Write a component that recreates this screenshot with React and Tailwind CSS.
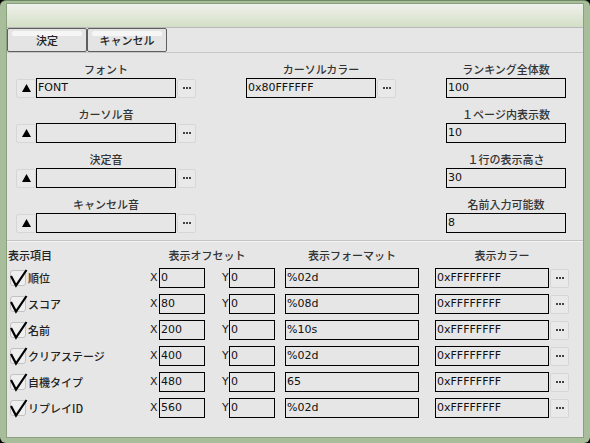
import React from "react";

const jp = { fontFamily: '"Noto Sans CJK JP", "DejaVu Sans", sans-serif' };
const mono = { fontFamily: '"DejaVu Sans", "Noto Sans CJK JP", sans-serif' };

function Dots() {
    return (
        <button className="w-[19px] h-[19px] flex items-center justify-center bg-[#e9e9e9] border border-[#d6d6d6] rounded-[2px]">
            <svg width="8" height="2" viewBox="0 0 8 2">
                <rect x="0" y="0" width="2" height="2" fill="#444" />
                <rect x="3" y="0" width="2" height="2" fill="#444" />
                <rect x="6" y="0" width="2" height="2" fill="#444" />
            </svg>
        </button>
    );
}

function UpBtn() {
    return (
        <button className="w-[20px] h-[19px] flex items-center justify-center bg-[#e9e9e9] border border-[#d6d6d6] rounded-[2px]">
            <svg width="9" height="8" viewBox="0 0 9 8">
                <polygon points="4.5,0 9,8 0,8" fill="#000" />
            </svg>
        </button>
    );
}

function Field({ value, className = "" }) {
    return (
        <div
            className={"h-[20px] border border-black bg-[#e6e6e6] text-[11px] leading-[18px] text-[#111] pl-[1px] overflow-hidden whitespace-nowrap " + className}
            style={mono}
        >
            {value}
        </div>
    );
}

function Label({ children }) {
    return (
        <div className="h-[16px] leading-[16px] text-center text-[11px] font-medium text-[#333]" style={jp}>
            {children}
        </div>
    );
}

function FileGroup({ label, value }) {
    return (
        <div className="flex flex-col">
            <Label>{label}</Label>
            <div className="flex items-center mt-[1px]">
                <UpBtn />
                <Field value={value} className="w-[140px]" />
                <div className="ml-[1px]">
                    <Dots />
                </div>
            </div>
        </div>
    );
}

function NumGroup({ label, value }) {
    return (
        <div className="flex flex-col">
            <Label>{label}</Label>
            <Field value={value} className="w-[120px] mt-[1px]" />
        </div>
    );
}

function Check() {
    return (
        <svg width="20" height="20" viewBox="0 0 20 20" className="shrink-0">
            <rect x="2.5" y="2.5" width="15" height="15" rx="2.5" fill="#efefef" stroke="#c2c2c2" />
            <path d="M3 8 L8 17.5 L18.5 2" fill="none" stroke="#000" strokeWidth="2.2" strokeLinejoin="miter" />
        </svg>
    );
}

const rows = [
    { name: "順位", x: "0", fmt: "%02d" },
    { name: "スコア", x: "80", fmt: "%08d" },
    { name: "名前", x: "200", fmt: "%10s" },
    { name: "クリアステージ", x: "400", fmt: "%02d" },
    { name: "自機タイプ", x: "480", fmt: "65" },
    { name: "リプレイID", x: "560", fmt: "%02d" },
];

export default function App() {
    return (
        <div className="w-[590px] h-[443px] bg-black">
            <div className="w-full h-full bg-[#a8be9b] rounded-[6px] border-t border-[#6f8a66] pl-[6px] pr-[6px] pt-[2px] pb-[5px]">
                <div className="w-full h-full border border-[#8aa07e] bg-[#e6e6e6] flex flex-col">
                    {/* TITLE */}
                    <div className="h-[24px] bg-gradient-to-b from-[#eff1ec] to-[#d3dfc6] border-b border-[#b9b9b9] shrink-0" />

                    {/* BUTTON BAR */}
                    <div className="h-[25px] flex border-b border-[#c6c6c6] shrink-0">
                        {["決定", "キャンセル"].map((t) => (
                            <button
                                key={t}
                                className="relative w-[80px] h-[24px] border border-[#5e5e5e] rounded-[2px] bg-[#e4e4e4] text-[11px] font-medium text-[#222]"
                                style={jp}
                            >
                                <span className="absolute left-[4px] right-[4px] top-[2px] h-[5px] rounded-full bg-[#f6f6f6]" />
                                <span className="relative">{t}</span>
                            </button>
                        ))}
                    </div>

                    {/* SETTINGS */}
                    <div className="h-[188px] flex pt-[8px] pl-[9px] border-b border-[#c4c4c4] shrink-0">
                        <div className="w-[180px] flex flex-col gap-[8px]">
                            <FileGroup label="フォント" value="FONT" />
                            <FileGroup label="カーソル音" value="" />
                            <FileGroup label="決定音" value="" />
                            <FileGroup label="キャンセル音" value="" />
                        </div>
                        <div className="w-[150px] ml-[50px] flex flex-col">
                            <Label>カーソルカラー</Label>
                            <div className="flex items-center mt-[1px]">
                                <Field value="0x80FFFFFF" className="w-[131px]" />
                                <div className="ml-[1px]">
                                    <Dots />
                                </div>
                            </div>
                        </div>
                        <div className="w-[120px] ml-[50px] flex flex-col gap-[8px]">
                            <NumGroup label="ランキング全体数" value="100" />
                            <NumGroup label="１ページ内表示数" value="10" />
                            <NumGroup label="１行の表示高さ" value="30" />
                            <NumGroup label="名前入力可能数" value="8" />
                        </div>
                    </div>

                    {/* TABLE */}
                    <div className="border-t border-[#f4f4f4] pt-[5px] pl-[1px] flex flex-col">
                        <div className="h-[16px] flex text-[11px] leading-[16px] font-medium text-[#333]" style={jp}>
                            <div className="w-[142px] text-[#222]">表示項目</div>
                            <div className="w-[114px] text-center">表示オフセット</div>
                            <div className="w-[21px]" />
                            <div className="w-[134px] text-center">表示フォーマット</div>
                            <div className="w-[16px]" />
                            <div className="w-[134px] text-center">表示カラー</div>
                        </div>
                        <div className="flex flex-col gap-[6px] mt-[5px]">
                            {rows.map((r) => (
                                <div key={r.name} className="h-[20px] flex items-center">
                                    <div className="w-[142px] flex items-center">
                                        <Check />
                                        <span className="text-[11px] font-medium text-[#222]" style={jp}>
                                            {r.name}
                                        </span>
                                    </div>
                                    <span className="w-[9px] text-[11px] text-[#222]" style={mono}>X</span>
                                    <Field value={r.x} className="w-[46px]" />
                                    <span className="w-[17px]" />
                                    <span className="w-[7px] text-[11px] text-[#222]" style={mono}>Y</span>
                                    <Field value="0" className="w-[46px]" />
                                    <span className="w-[10px]" />
                                    <Field value={r.fmt} className="w-[134px]" />
                                    <span className="w-[16px]" />
                                    <Field value="0xFFFFFFFF" className="w-[114px]" />
                                    <div className="ml-[1px]">
                                        <Dots />
                                    </div>
                                </div>
                            ))}
                        </div>
                    </div>
                </div>
            </div>
        </div>
    );
}
